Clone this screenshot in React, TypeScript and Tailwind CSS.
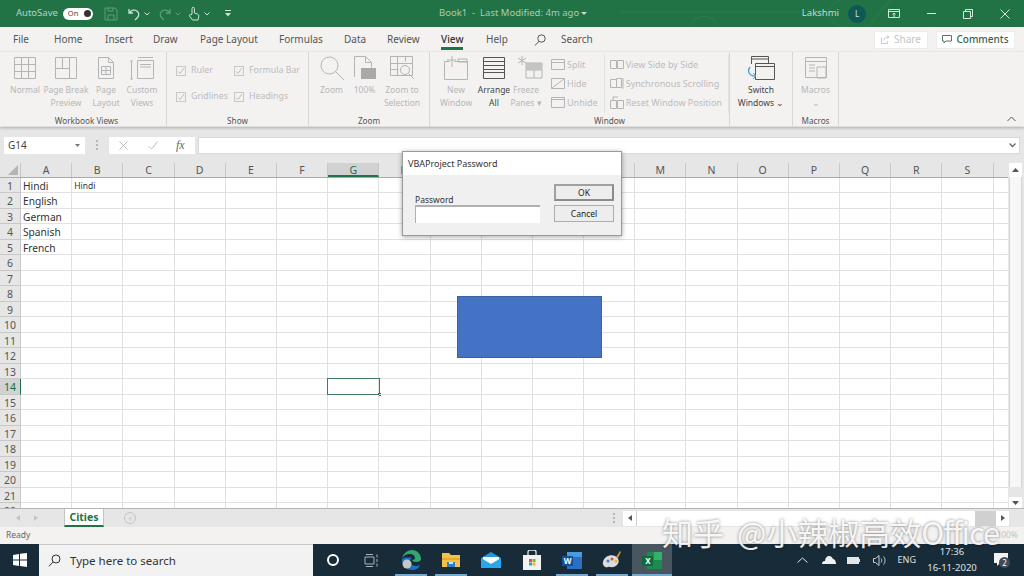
import { ReactNode } from 'react'

const ui = "font-['Noto_Sans',sans-serif]"
const columns = ['A', 'B', 'C', 'D', 'E', 'F', 'G', 'H', 'I', 'J', 'K', 'L', 'M', 'N', 'O', 'P', 'Q', 'R', 'S', '']
const rows = Array.from({ length: 22 }, (_, i) => i + 1)
const languages = ['Hindi', 'English', 'German', 'Spanish', 'French']
const tabs = [
  { label: 'File', width: 'w-[41px]' },
  { label: 'Home', width: 'w-[51px]' },
  { label: 'Insert', width: 'w-[48px]' },
  { label: 'Draw', width: 'w-[47px]' },
  { label: 'Page Layout', width: 'w-[79px]' },
  { label: 'Formulas', width: 'w-[65px]' },
  { label: 'Data', width: 'w-[43px]' },
  { label: 'Review', width: 'w-[54px]' },
  { label: 'View', width: 'w-[45px]' },
  { label: 'Help', width: 'w-[21px]' },
]

function Glyph({ w = 32, h = 32, children, className = '' }: { w?: number; h?: number; children: ReactNode; className?: string }) {
  return (
    <svg width={w} height={h} viewBox={`0 0 ${w} ${h}`} fill="none" stroke="#b4b4b4" strokeWidth="1" className={className}>
      {children}
    </svg>
  )
}

function BigButton({ w, icon, label, dark }: { w: number; icon: ReactNode; label: string[]; dark?: boolean }) {
  return (
    <div className="flex flex-col items-center shrink-0" style={{ width: w }}>
      <div className="h-[26px] flex items-center justify-center">{icon}</div>
      <div className={`mt-[2px] text-center text-[8.5px] leading-[13px] whitespace-nowrap ${dark ? 'text-[#444444]' : 'text-[#b6b6b6]'}`}>
        {label.map((l) => (
          <div key={l}>{l}</div>
        ))}
      </div>
    </div>
  )
}

function GroupLabel({ children, className = '' }: { children?: ReactNode; className?: string }) {
  return <div className={`h-[11px] shrink-0 text-center text-[8.2px] leading-[11px] text-[#555555] ${className}`}>{children}</div>
}

function Group({ w, label, children, className = '' }: { w: number; label: string; children: ReactNode; className?: string }) {
  return (
    <div className="flex flex-col shrink-0 h-full border-r border-[#d6d6d6]" style={{ width: w }}>
      <div className={`flex-1 min-h-0 flex pt-[3px] ${className}`}>{children}</div>
      <GroupLabel>{label}</GroupLabel>
    </div>
  )
}

function Check({ label, className = '' }: { label: string; className?: string }) {
  return (
    <div className={`h-[13px] flex items-center gap-[5px] text-[8.8px] leading-[13px] text-[#bcbcbc] whitespace-nowrap ${className}`}>
      <span className="w-[10px] h-[10px] border border-[#c8c8c8] flex items-center justify-center">
        <svg width="8" height="8" viewBox="0 0 8 8" fill="none" stroke="#bdbdbd">
          <path d="M1 4.5 3 6.5 7 1" />
        </svg>
      </span>
      {label}
    </div>
  )
}

function SmallRow({ icon, label }: { icon: ReactNode; label: string }) {
  return (
    <div className="h-[19px] flex items-center gap-[2px] text-[9px] text-[#bcbcbc] whitespace-nowrap">
      {icon}
      {label}
    </div>
  )
}

function Qat() {
  return (
    <div className="flex items-center">
      <svg width="14" height="14" viewBox="0 0 14 14" fill="none" stroke="#5f9c7d" className="ml-[11px]">
        <path d="M1 1h10l2 2v10H1zM4 13V8h6v5M4 1v3h5V1" />
      </svg>
      <svg width="14" height="14" viewBox="0 0 14 14" fill="none" stroke="#cfe3d8" strokeWidth="1.3" className="ml-[9px]">
        <path d="M2 2v4h4M2.5 6C4 3 8 2 10.5 4.5 13 7 12 10 8 13" />
      </svg>
      <svg width="6" height="4" viewBox="0 0 6 4" fill="none" stroke="#cfe3d8" className="ml-[3px]">
        <path d="M.5.5 3 3 5.5.5" />
      </svg>
      <svg width="14" height="14" viewBox="0 0 14 14" fill="none" stroke="#5f9c7d" strokeWidth="1.3" className="ml-[8px]">
        <path d="M12 2v4H8M11.5 6C10 3 6 2 3.5 4.5 1 7 2 10 6 13" />
      </svg>
      <svg width="6" height="4" viewBox="0 0 6 4" fill="none" stroke="#5f9c7d" className="ml-[3px]">
        <path d="M.5.5 3 3 5.5.5" />
      </svg>
      <svg width="12" height="15" viewBox="0 0 12 15" fill="none" stroke="#cfe3d8" className="ml-[7px]">
        <path d="M4 8V2.5a1.2 1.2 0 0 1 2.4 0V7l3 1c1.2.4 1.6 1 1.4 2.2L10 14H4.5L1.5 10c-.6-1 .6-2 1.5-1z" />
      </svg>
      <svg width="6" height="4" viewBox="0 0 6 4" fill="none" stroke="#cfe3d8" className="ml-[4px]">
        <path d="M.5.5 3 3 5.5.5" />
      </svg>
      <svg width="8" height="7" viewBox="0 0 8 7" className="ml-[14px]" fill="#cfe3d8">
        <path d="M1 0h6v1H1zM1 3h6L4 6.5z" />
      </svg>
    </div>
  )
}

function TitleBar() {
  return (
    <div className="relative h-[27px] shrink-0 bg-[#217346] flex items-center text-[9.5px] text-[#c5dccf] overflow-hidden">
      <svg width="300" height="27" viewBox="0 0 300 27" fill="none" stroke="#2b7c50" className="absolute left-[620px] top-0">
        <path d="M0 12h180M70 27c2-14 26-14 28 0M220 0c-20 10-12 27 10 27M270 0l-22 27" />
      </svg>
      <span className="ml-[16px] text-[#b7d4c4]">AutoSave</span>
      <div className="ml-[5px] w-[30px] h-[12px] rounded-full bg-white flex items-center justify-between pl-[5px] pr-[2px] text-[7.5px] text-[#444444]">
        On
        <span className="w-[7px] h-[7px] rounded-full bg-[#333333]" />
      </div>
      <Qat />
      <span className="absolute left-[439px] text-[#a8cbb8]">Book1&nbsp; -&nbsp; Last Modified: 4m ago</span>
      <svg width="6" height="3" viewBox="0 0 6 3" fill="#c5dccf" className="absolute left-[581px] top-[12px]">
        <path d="M0 0h6L3 3z" />
      </svg>
      <div className="relative ml-auto flex items-center pr-[14px]">
        <span>Lakshmi</span>
        <span className="ml-[9px] w-[18px] h-[18px] rounded-full bg-[#0c5a58] flex items-center justify-center text-[8px] text-[#d5e8de]">L</span>
        <svg width="12" height="10" viewBox="0 0 12 10" fill="none" stroke="#d5e8de" className="ml-[22px]">
          <path d="M.5.5h11v8H.5zM.5 2.5h11M6 8V4M4.5 5.5 6 4l1.5 1.5" />
        </svg>
        <div className="ml-[27px] w-[9px] h-px bg-[#d5e8de]" />
        <svg width="10" height="10" viewBox="0 0 10 10" fill="none" stroke="#d5e8de" className="ml-[27px]">
          <path d="M.5 2.5h7v7h-7zM2.5 2.5v-2h7v7h-2" />
        </svg>
        <svg width="10" height="10" viewBox="0 0 10 10" fill="none" stroke="#d5e8de" className="ml-[27px]">
          <path d="M.5.5l9 9M9.5.5l-9 9" />
        </svg>
      </div>
    </div>
  )
}

function TabRow() {
  return (
    <div className="h-[25px] shrink-0 bg-[#f3f2f1] flex items-center pl-[13px] pr-[9px] text-[10px] text-[#555555]">
      <div className="flex">
        {tabs.map((t) => (
          <div key={t.label} className={`shrink-0 whitespace-nowrap ${t.width}`}>
            <span className={`relative ${t.label === 'View' ? 'text-[#333333] font-medium' : ''}`}>
              {t.label}
              {t.label === 'View' && <span className="absolute left-0 right-0 bottom-[-4px] h-[3px] bg-[#217346]" />}
            </span>
          </div>
        ))}
      </div>
      <svg width="12" height="12" viewBox="0 0 12 12" fill="none" stroke="#555555" className="ml-[27px]">
        <circle cx="7.5" cy="4.5" r="3.7" />
        <path d="M5 7.5.8 11.5" />
      </svg>
      <span className="ml-[15px]">Search</span>
      <div className="ml-auto flex gap-[8px]">
        <div className="w-[54px] h-[18px] bg-white border border-[#ececec] flex items-center justify-center gap-[4px] text-[#c4c4c4]">
          <svg width="9" height="9" viewBox="0 0 9 9" fill="none" stroke="#c8c8c8">
            <path d="M.5 2.5v6h6V6M3 5.5C3 3 5 2 8 2M6 .5 8 2 6 3.5" />
          </svg>
          Share
        </div>
        <div className="w-[79px] h-[18px] bg-white border border-[#ececec] flex items-center justify-center gap-[4px] font-medium text-[#3c6350]">
          <svg width="10" height="9" viewBox="0 0 10 9" fill="none" stroke="#55766a">
            <path d="M.5.5h9v5.5H4L2 8V6H.5z" />
          </svg>
          Comments
        </div>
      </div>
    </div>
  )
}

function Ribbon() {
  return (
    <div className="relative h-[75px] shrink-0 bg-[#f3f2f1] flex pl-[7px] shadow-[0_1px_3px_rgba(0,0,0,0.25)] border-b border-[#dedede] z-10">
      <Group w={160} label="Workbook Views">
        <BigButton
          w={36}
          label={['Normal']}
          icon={
            <Glyph w={24} h={24}>
              <path d="M1.5 1.5h21v21h-21zM1.5 8.5h21M1.5 15.5h21M8.5 1.5v21M15.5 1.5v21" />
            </Glyph>
          }
        />
        <BigButton
          w={46}
          label={['Page Break', 'Preview']}
          icon={
            <Glyph w={24} h={24}>
              <path d="M1.5 1.5h21v21h-21zM1.5 12.5h14M15.5 1.5v21M8.5 1.5v11" />
            </Glyph>
          }
        />
        <BigButton
          w={34}
          label={['Page', 'Layout']}
          icon={
            <Glyph w={18} h={24}>
              <path d="M1.5 1.5h10l5 5v16h-15zM11.5 1.5v5h5M4.5 10.5h9v8h-9zM4.5 14.5h9M9 10.5v8" />
            </Glyph>
          }
        />
        <BigButton
          w={38}
          label={['Custom', 'Views']}
          icon={
            <Glyph w={24} h={24}>
              <path d="M7.5 4.5h16v18h-16zM10 8.5h11M10 11h11M1.5 5v18M0 5h3M0 23h3M8 1.5h15" />
            </Glyph>
          }
        />
      </Group>
      <Group w={142} label="Show" className="flex-col">
        <div className="flex pl-[9px] pt-[9px]">
          <Check label="Ruler" className="w-[58px]" />
          <Check label="Formula Bar" />
        </div>
        <div className="flex pl-[9px] pt-[13px]">
          <Check label="Gridlines" className="w-[58px]" />
          <Check label="Headings" />
        </div>
      </Group>
      <Group w={121} label="Zoom" className="pl-[3px]">
        <BigButton
          w={39}
          label={['Zoom']}
          icon={
            <Glyph w={26} h={26}>
              <circle cx="10.5" cy="10.5" r="8.5" />
              <path d="M16.5 16.5 25 25" />
            </Glyph>
          }
        />
        <BigButton
          w={27}
          label={['100%']}
          icon={
            <Glyph w={24} h={26}>
              <path d="M1.5 22V1.5h11l6 6v5M12.5 1.5v6h6" />
              <path d="M8 13h15v11H8z" fill="#a9a9a9" stroke="none" />
            </Glyph>
          }
        />
        <BigButton
          w={48}
          label={['Zoom to', 'Selection']}
          icon={
            <Glyph w={26} h={26}>
              <path d="M1.5 1.5h22v19h-22zM1.5 8.5h22M1.5 14.5h8M8.5 1.5v19M16.5 1.5v5" />
              <circle cx="16" cy="15" r="4.5" />
              <path d="M19.5 18.5 25 24" />
            </Glyph>
          }
        />
      </Group>
      <div className="flex flex-col shrink-0 w-[300px] h-full border-r border-[#d6d6d6]">
        <div className="flex-1 min-h-0 flex pt-[3px] pl-[5px]">
          <BigButton
            w={42}
            label={['New', 'Window']}
            icon={
              <Glyph w={26} h={26}>
                <path d="M1.5 6.5h5M11.5 6.5h13v18h-23v-18M9 1v11M4 5h9M15 4h9v3h-9z" />
              </Glyph>
            }
          />
          <BigButton
            w={34}
            label={['Arrange', 'All']}
            dark
            icon={
              <svg width="24" height="24" viewBox="0 0 24 24" fill="none" stroke="#555555">
                <path d="M1.5 1.5h21v21h-21zM1.5 5.5h21M1.5 9.5h21M1.5 13.5h21M1.5 16.5h21" />
              </svg>
            }
          />
          <BigButton
            w={30}
            label={['Freeze', 'Panes ▾']}
            icon={
              <Glyph w={26} h={26} className="ml-[7px]">
                <path d="M9 8h16v15H9zM9 15h16M17 8v15" />
                <path d="M9 8h16v7H9z" fill="#c4c4c4" stroke="none" />
                <path d="M5 1v9M1 3l8 5M9 3 1 8" />
              </Glyph>
            }
          />
          <div className="ml-[10px] w-[54px] border-r border-[#e2e2e2] mb-[2px]">
            <SmallRow
              label="Split"
              icon={
                <Glyph w={14} h={13}>
                  <path d="M.5 1.5h13v10H.5zM.5 4.5h13" />
                </Glyph>
              }
            />
            <SmallRow
              label="Hide"
              icon={
                <Glyph w={14} h={13}>
                  <path d="M.5 1.5h13v10H.5zM.5 11.5l13-10" />
                </Glyph>
              }
            />
            <SmallRow
              label="Unhide"
              icon={
                <Glyph w={14} h={13}>
                  <path d="M.5 1.5h13v10H.5zM.5 3.5h13" />
                </Glyph>
              }
            />
          </div>
          <div className="pl-[5px] w-[125px] border-r border-[#e2e2e2] mb-[2px]">
            <SmallRow
              label="View Side by Side"
              icon={
                <Glyph w={14} h={12}>
                  <path d="M.5 1.5h6v8h-6zM7.5 1.5h6v8h-6z" />
                </Glyph>
              }
            />
            <SmallRow
              label="Synchronous Scrolling"
              icon={
                <Glyph w={14} h={13}>
                  <path d="M.5 2.5h6v8h-6zM6.5 1.5h5v9h-5zM13 1v11" />
                </Glyph>
              }
            />
            <SmallRow
              label="Reset Window Position"
              icon={
                <Glyph w={14} h={13}>
                  <path d="M.5 4.5h6v8h-6zM7.5 4.5h6v8h-6zM3 4V1h5" />
                </Glyph>
              }
            />
          </div>
        </div>
        <GroupLabel className="pl-[60px]">Window</GroupLabel>
      </div>
      <Group w={63} label="" className="justify-center">
        <BigButton
          w={60}
          label={['Switch', 'Windows ⌄']}
          dark
          icon={
            <svg width="28" height="26" viewBox="0 0 28 26" fill="none" stroke="#555555">
              <path d="M4.5 9V1.5h17V8M8.5 8.5h19v16h-19zM8.5 11.5h19M4.5 4h17" />
              <path d="M3 12c-3 4-1 9 5 9" stroke="#4a9fd8" strokeWidth="1.3" />
              <path d="M6 18l3 3-3 3" stroke="#4a9fd8" />
            </svg>
          }
        />
      </Group>
      <Group w={46} label="Macros">
        <BigButton
          w={45}
          label={['Macros', '⌄']}
          icon={
            <Glyph w={24} h={24}>
              <path d="M1.5 1.5h21v20h-21zM1.5 5.5h21M5 9h6M5 12h6M5 15h6M13 11h9v11h-9z" />
            </Glyph>
          }
        />
      </Group>
      <svg width="9" height="6" viewBox="0 0 9 6" fill="none" stroke="#555555" className="absolute right-[8px] bottom-[4px]">
        <path d="M.5 5 4.5 1l4 4" />
      </svg>
    </div>
  )
}

function FormulaBar() {
  return (
    <div className="h-[36px] shrink-0 bg-[#e6e6e6] flex items-center pl-[4px] pr-[4px] text-[10px] text-[#444444]">
      <div className="w-[81px] h-[17px] bg-white flex items-center justify-between pl-[4px] pr-[5px]">
        G14
        <svg width="5" height="3" viewBox="0 0 5 3" fill="#777777">
          <path d="M0 0h5L2.5 3z" />
        </svg>
      </div>
      <span className="ml-[11px] w-[2px] h-[10px] border-l-2 border-dotted border-[#b8b8b8]" />
      <div className="ml-[11px] w-[86px] h-[17px] bg-white flex items-center pl-[10px]">
        <svg width="9" height="9" viewBox="0 0 9 9" fill="none" stroke="#bdbdbd">
          <path d="M.5.5l8 8M8.5.5l-8 8" />
        </svg>
        <svg width="10" height="9" viewBox="0 0 10 9" fill="none" stroke="#bdbdbd" className="ml-[20px]">
          <path d="M.5 5 3.5 8 9.5.5" />
        </svg>
        <span className="ml-[18px] italic font-['Liberation_Serif',serif] text-[12px] text-[#666666]">fx</span>
      </div>
      <div className="ml-[3px] flex-1 h-[17px] bg-white flex items-center justify-end pr-[3px] border border-[#d8d8d8]">
        <svg width="7" height="5" viewBox="0 0 7 5" fill="none" stroke="#666666" strokeWidth="1.3">
          <path d="M.5.5 3.5 3.5l3-3" />
        </svg>
      </div>
    </div>
  )
}

function Sheet() {
  return (
    <div className="flex flex-1 min-h-0 bg-[#e6e6e6]">
      <div className="relative flex-1 min-w-0 overflow-hidden bg-white">
        <div className="flex h-[14.5px] bg-[#e6e6e6] border-b border-[#ababab]">
          <div className="relative w-[21px] shrink-0 border-r border-[#c8c8c8]">
            <div className="absolute right-[2px] bottom-[2px] w-0 h-0 border-l-[10px] border-l-transparent border-b-[10px] border-b-[#b4b4b4]" />
          </div>
          {columns.map((c) => (
            <div
              key={c}
              className={`w-[51.2px] shrink-0 border-r border-[#c8c8c8] text-center text-[10.5px] leading-[15px] ${
                c === 'G' ? 'bg-[#d2d2d2] text-[#1e6b42] border-b-2 border-b-[#217346]' : 'text-[#555555]'
              }`}
            >
              {c}
            </div>
          ))}
        </div>
        {rows.map((r) => (
          <div key={r} className="flex h-[15.5px]">
            <div
              className={`w-[21px] shrink-0 text-center text-[10.5px] leading-[16.5px] border-r border-b border-[#c8c8c8] ${
                r === 14 ? 'bg-[#d2d2d2] text-[#1e6b42] border-r-[#217346]' : 'bg-[#e6e6e6] text-[#555555]'
              }`}
            >
              {r}
            </div>
            {columns.map((c) => (
              <div
                key={c}
                className={`relative w-[51.2px] shrink-0 border-r border-b border-[#e1e1e1] pl-[2px] leading-[16.5px] whitespace-nowrap text-[#333333] ${
                  c === 'B' ? 'text-[8.5px]' : 'text-[10.2px]'
                }`}
              >
                {c === 'A' && languages[r - 1]}
                {c === 'B' && r === 1 && 'Hindi'}
                {c === 'G' && r === 14 && (
                  <div className="absolute left-[-1px] top-[-1px] w-[52.5px] h-[16.5px] border-[1.5px] border-[#3f7d5d]">
                    <div className="absolute right-[-2px] bottom-[-2px] w-[3px] h-[3px] bg-[#217346]" />
                  </div>
                )}
              </div>
            ))}
          </div>
        ))}
        {/* shape on the sheet */}
        <div className="absolute left-[457px] top-[133px] w-[145px] h-[62px] bg-[#4472c4] border border-[#3a629f]" />
      </div>
      <div className="w-[16px] shrink-0 flex flex-col bg-[#e6e6e6] pl-[1px] pr-[2px]">
        <div className="h-[14px] bg-white flex items-center justify-center">
          <svg width="7" height="4" viewBox="0 0 7 4" fill="#555555">
            <path d="M3.5 0 7 4H0z" />
          </svg>
        </div>
        <div className="flex-1 mb-[10px] bg-[#f7f7f7] border-x border-[#d4d4d4]" />
        <div className="h-[11px] bg-white flex items-center justify-center">
          <svg width="7" height="4" viewBox="0 0 7 4" fill="#555555">
            <path d="M0 0h7L3.5 4z" />
          </svg>
        </div>
      </div>
    </div>
  )
}

function SheetTabs() {
  return (
    <div className="relative h-[19px] shrink-0 bg-[#e6e6e6] border-t border-[#b4b4b4] flex items-center">
      <svg width="4" height="6" viewBox="0 0 4 6" fill="#c4c4c4" className="ml-[16px]">
        <path d="M4 0v6L0 3z" />
      </svg>
      <svg width="4" height="6" viewBox="0 0 4 6" fill="#c4c4c4" className="ml-[14px]">
        <path d="M0 0v6l4-3z" />
      </svg>
      <div className="ml-[26px] w-[40px] h-[18px] -mt-px bg-white border-b-2 border-b-[#217346] border-x border-x-[#c4c4c4] text-center text-[10.5px] leading-[16px] font-bold text-[#217346]">
        Cities
      </div>
      <div className="ml-[20px] w-[12px] h-[12px] rounded-full border border-[#c4c4c4] flex items-center justify-center text-[9px] leading-none text-[#c4c4c4]">
        +
      </div>
      <span className="ml-[477px] w-[2px] h-[10px] border-l-2 border-dotted border-[#b4b4b4]" />
      <div className="ml-[8px] w-[13px] h-[15px] bg-white flex items-center justify-center">
        <svg width="4" height="6" viewBox="0 0 4 6" fill="#555555">
          <path d="M4 0v6L0 3z" />
        </svg>
      </div>
      <div className="w-[339px] h-[15px] bg-white border-l border-[#d0d0d0]" />
      <div className="w-[21px] h-[15px] bg-[#d0d0d0]" />
      <div className="w-[13px] h-[15px] bg-white flex items-center justify-center">
        <svg width="4" height="6" viewBox="0 0 4 6" fill="#555555">
          <path d="M0 0v6l4-3z" />
        </svg>
      </div>
    </div>
  )
}

function Dialog() {
  return (
    <div className="absolute left-[402px] top-[151px] w-[220px] h-[85px] bg-[#f0f0f0] border border-[#9a9a9a] shadow-[0_1px_5px_rgba(0,0,0,0.35)] z-20">
      <div className="h-[23px] bg-white pl-[5px] text-[9px] leading-[23px] text-[#333333]">VBAProject Password</div>
      <div className="flex pl-[12px] pt-[9px]">
        <div className="w-[139px] pt-[10px]">
          <div className="text-[8.5px] leading-[11px] text-[#333333]">Password</div>
          <div className="w-[125px] h-[18px] bg-white border-t-2 border-l border-[#b0b0b0]" />
        </div>
        <div className="flex flex-col gap-[4px]">
          <div className="w-[60px] h-[17px] bg-[#ededed] border-2 border-[#8c8c8c] border-l-[#a0a0a0] border-t-[#a0a0a0] text-center text-[8.5px] leading-[13px] text-[#222222]">OK</div>
          <div className="w-[60px] h-[17px] bg-[#ededed] border border-[#adadad] text-center text-[8.5px] leading-[15px] text-[#222222]">Cancel</div>
        </div>
      </div>
    </div>
  )
}

function TaskIcon({ children, active, bar = true }: { children: ReactNode; active?: boolean; bar?: boolean }) {
  return (
    <div className={`relative w-[40.2px] h-full flex items-center justify-center ${active ? 'bg-[#47565f]' : ''}`}>
      {children}
      {bar && <div className={`absolute bottom-0 h-[2px] bg-[#77a9cf] ${active ? 'left-0 right-0' : 'left-[4px] right-[4px]'}`} />}
    </div>
  )
}

function Taskbar() {
  return (
    <div className="h-[32px] shrink-0 bg-[#182b38] flex items-center text-[#dfe5e9]">
      <div className="w-[39px] flex justify-center">
        <svg width="14" height="14" viewBox="0 0 14 14" fill="#ffffff">
          <path d="M0 2 6 1v5.5H0zM7 .8 14 0v6.5H7zM0 7.5h6V13l-6-1zM7 7.5h7V14l-7-1z" />
        </svg>
      </div>
      <div className="w-[274px] h-full bg-[#f2f2f2] border-t border-[#c8c8c8] flex items-center pl-[9px] text-[11.5px] text-[#333333]">
        <svg width="13" height="13" viewBox="0 0 13 13" fill="none" stroke="#333333">
          <circle cx="8" cy="5" r="4" />
          <path d="M5.2 8 .8 12.3" />
        </svg>
        <span className="ml-[9px]">Type here to search</span>
      </div>
      <div className="w-[40px] flex justify-center">
        <span className="w-[12px] h-[12px] rounded-full border-2 border-white" />
      </div>
      <div className="w-[36px] flex justify-center">
        <svg width="14" height="13" viewBox="0 0 14 13" fill="none" stroke="#aab3b9">
          <path d="M1 3h9v7H1zM2 .5h7M2 12.5h7M13 .5v3M13 5v3M13 9.5v3" />
        </svg>
      </div>
      <div className="flex h-full ml-[2px]">
        <TaskIcon>
          <svg width="20" height="20" viewBox="0 0 20 20">
            <path d="M1 9C2 3 7 0 11 0c5 0 9 4 9 9 0 2-2 3-5 3-2 0-4-1-4-2 2 0 3-1 3-2 0-2-2-4-5-4C5 4 2 6 1 9z" fill="#2fa86f" />
            <path d="M1 9c0 6 4 11 10 11 4 0 7-2 8-5-3 2-8 1-10-2C8 11 9 9 11 8 6 7 2 8 1 9z" fill="#1c73c4" />
            <circle cx="6" cy="14" r="4.5" fill="#c7c7c7" />
          </svg>
        </TaskIcon>
        <TaskIcon>
          <svg width="20" height="16" viewBox="0 0 20 16">
            <path d="M1 1h7l2 2h9v12H1z" fill="#f5c04a" />
            <path d="M1 6h18v2H1z" fill="#e8a92f" />
            <path d="M6 10h8v5H6z" fill="#2c7fc1" />
            <path d="M8 10h4v2H8z" fill="#cfe6f7" />
          </svg>
        </TaskIcon>
        <TaskIcon bar={false}>
          <svg width="20" height="16" viewBox="0 0 20 16">
            <path d="M0 6 10 0l10 6v10H0z" fill="#1e9be0" />
            <path d="M2 5h16v4l-8 3-8-3z" fill="#ffffff" />
            <path d="M0 6l10 6 10-6v10H0z" fill="#2aa7ea" />
          </svg>
        </TaskIcon>
        <TaskIcon bar={false}>
          <svg width="20" height="20" viewBox="0 0 20 20">
            <path d="M1 5h18v15H1z" fill="#f2f2f2" />
            <path d="M6 6V2c0-1 1-2 2-2h4c1 0 2 1 2 2v4" fill="none" stroke="#e6e6e6" strokeWidth="1.3" />
            <path d="M7 9h3v3H7z" fill="#e5532d" />
            <path d="M10.5 9h3v3h-3z" fill="#7db72f" />
            <path d="M7 12.5h3v3H7z" fill="#2a9fe0" />
            <path d="M10.5 12.5h3v3h-3z" fill="#f6b91b" />
          </svg>
        </TaskIcon>
        <TaskIcon>
          <div className="relative w-[20px] h-[17px]">
            <svg width="20" height="17" viewBox="0 0 20 17">
              <path d="M5 0h15v17H5z" fill="#2b6fc4" />
              <path d="M5 0h15v5H5z" fill="#4a9ae0" />
              <path d="M0 4h11v10H0z" fill="#144f9e" />
            </svg>
            <span className="absolute left-[2px] top-[4px] text-[8px] leading-[10px] font-bold text-white">W</span>
          </div>
        </TaskIcon>
        <TaskIcon>
          <svg width="20" height="20" viewBox="0 0 20 20">
            <path d="M1 12C2 7 8 4 13 6c4 2 5 6 2 9-4 4-8 1-9 2-2 1-6-1-5-5z" fill="#dcdcdc" />
            <circle cx="6" cy="11" r="1.5" fill="#3f7fc4" />
            <circle cx="10" cy="9" r="1.5" fill="#d84a3a" />
            <circle cx="14" cy="11" r="1.5" fill="#e8b92f" />
            <path d="M14 7 18 1l1 1-3 6z" fill="#c98f3c" />
          </svg>
        </TaskIcon>
        <TaskIcon active>
          <div className="relative w-[20px] h-[17px]">
            <svg width="20" height="17" viewBox="0 0 20 17">
              <path d="M5 0h15v17H5z" fill="#1f8a50" />
              <path d="M12 0h8v8h-8z" fill="#33b06d" />
              <path d="M0 4h11v10H0z" fill="#0f6a3a" />
            </svg>
            <span className="absolute left-[3px] top-[4px] text-[8px] leading-[10px] font-bold text-white">X</span>
          </div>
        </TaskIcon>
      </div>
      <div className="ml-auto flex items-center h-full">
        <svg width="11" height="6" viewBox="0 0 11 6" fill="none" stroke="#dfe5e9">
          <path d="M.5 5.5 5.5 1l5 4.5" />
        </svg>
        <svg width="14" height="8" viewBox="0 0 14 8" fill="#eef2f4" className="ml-[14px]">
          <path d="M0 8c0-2 1-3 3-3 0-3 2-5 4-5s3 1 4 3c2 0 3 3 3 5z" />
        </svg>
        <svg width="13" height="7" viewBox="0 0 13 7" className="ml-[11px]">
          <path d="M0 0h12v7H0z" fill="#dfe5e9" />
          <path d="M12 2h1v3h-1z" fill="#dfe5e9" />
        </svg>
        <svg width="13" height="11" viewBox="0 0 13 11" fill="none" stroke="#c8d0d5" className="ml-[13px]">
          <path d="M.5 3.5h2L6 .5v10l-3.5-3h-2zM8 3.5c1 1 1 3 0 4M10.5 1.5c2 2 2 6 0 8" />
        </svg>
        <span className="ml-[12px] text-[9px] text-[#dfe5e9]">ENG</span>
        <div className="ml-[11px] w-[50px] text-center text-[9.5px] leading-[16px]">
          <div>17:36</div>
          <div className="whitespace-nowrap">16-11-2020</div>
        </div>
        <div className="relative ml-[17px] mr-[16px] w-[14px] h-[14px]">
          <svg width="14" height="13" viewBox="0 0 14 13" fill="#f2f2f2">
            <path d="M0 0h14v10H6l-3 3v-3H0z" />
          </svg>
          <span className="absolute left-[5px] top-[4px] w-[11px] h-[11px] rounded-full bg-[#3d4c56] text-center text-[8px] leading-[11px] text-white">2</span>
        </div>
      </div>
    </div>
  )
}

export default function App() {
  return (
    <div className={`relative w-[1024px] h-[576px] flex flex-col overflow-hidden bg-white ${ui}`}>
      <TitleBar />
      <TabRow />
      <Ribbon />
      <FormulaBar />
      <Sheet />
      <SheetTabs />
      <div className="h-[17px] shrink-0 bg-[#f3f2f1] flex items-center justify-between px-[6px] text-[8.5px] text-[#666666]">
        <span>Ready</span>
        <span className="text-[#c4c4c4]">100%</span>
      </div>
      <Taskbar />
      <Dialog />
      <div className="absolute left-[662px] top-[515px] text-[31px] leading-[34px] text-white/90 whitespace-nowrap font-['Noto_Sans_CJK_SC',sans-serif] [text-shadow:0_0_3px_rgba(0,0,0,0.5)]">
        知乎 <span className="ml-[6px]">@小辣椒高效</span>
        <span className="tracking-[-1px]">Office</span>
      </div>
    </div>
  )
}
